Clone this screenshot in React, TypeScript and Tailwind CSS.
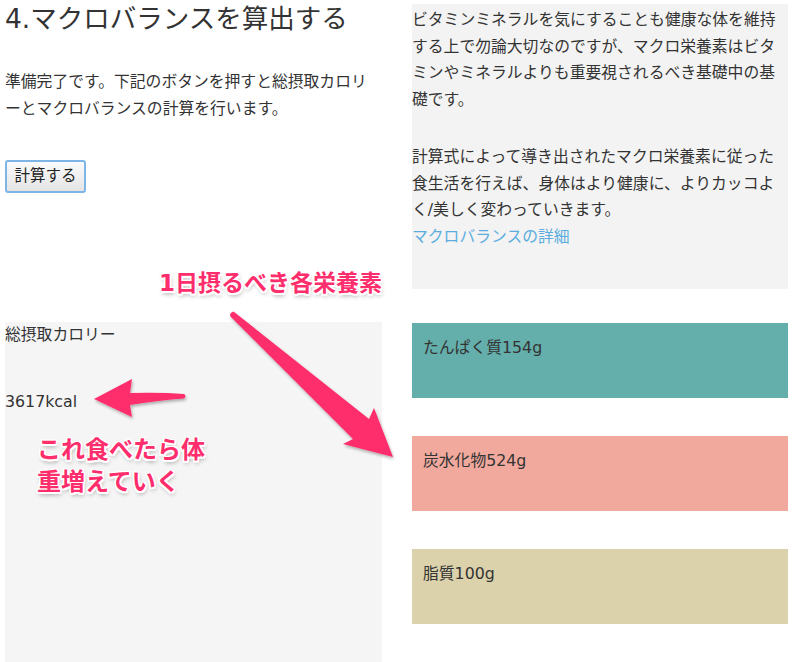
import React from "react";

const font = "font-['DejaVu_Sans','Noto_Sans_CJK_JP',sans-serif]";
const outline =
  "[text-shadow:1.5px_0_0_#fff,-1.5px_0_0_#fff,0_1.5px_0_#fff,0_-1.5px_0_#fff,1.5px_1.5px_0_#fff,-1.5px_-1.5px_0_#fff,1.5px_-1.5px_0_#fff,-1.5px_1.5px_0_#fff,1px_3px_4px_rgba(0,0,0,0.35)]";

export default function App() {
  return (
    <div className={`relative w-[800px] h-[662px] overflow-hidden bg-white text-[#333] ${font}`}>
      <div className="grid grid-cols-[377px_376px] gap-x-[30px] pl-[5px]">
        {/* Row 1 left */}
        <div>
          <h1 className="text-[26.5px] leading-[38px] font-normal text-[#333]">4.マクロバランスを算出する</h1>
          <p className="mt-[31px] text-[15.8px] leading-[26.5px]">
            準備完了です。下記のボタンを押すと総摂取カロリ
            <br />
            ーとマクロバランスの計算を行います。
          </p>
          <button className="mt-[38px] w-[81px] h-[33px] rounded-[3px] border-2 border-[#7db5e6] bg-gradient-to-b from-[#fbfbfb] to-[#e4e4e4] text-[15.5px] text-[#222] flex items-center justify-center">
            計算する
          </button>
        </div>
        {/* Row 1 right */}
        <div className="mt-[4px] h-[285px] bg-[#f3f3f3] pt-[3px] text-[15.8px] leading-[26.5px]">
          <p>
            ビタミンミネラルを気にすることも健康な体を維持
            <br />
            する上で勿論大切なのですが、マクロ栄養素はビタ
            <br />
            ミンやミネラルよりも重要視されるべき基礎中の基
            <br />
            礎です。
          </p>
          <p className="mt-[31px]">
            計算式によって導き出されたマクロ栄養素に従った
            <br />
            食生活を行えば、身体はより健康に、よりカッコよ
            <br />
            く/美しく変わっていきます。
          </p>
          <a className="text-[#5badde]">マクロバランスの詳細</a>
        </div>
        {/* Row 2 left */}
        <div className="mt-[33px] h-[360px] bg-[#f5f5f5] text-[15.8px] leading-[26px]">
          <p>総摂取カロリー</p>
          <p className="mt-[41px]">3617kcal</p>
        </div>
        {/* Row 2 right */}
        <div className="mt-[34px] flex flex-col gap-[38px] text-[15.8px] leading-[26px]">
          <div className="h-[75px] bg-[#64aeab] pl-[11px] pt-[12px]">たんぱく質154g</div>
          <div className="h-[75px] bg-[#f1a99d] pl-[11px] pt-[12px]">炭水化物524g</div>
          <div className="h-[75px] bg-[#dbd2ac] pl-[11px] pt-[12px]">脂質100g</div>
        </div>
      </div>

      {/* Annotations overlay */}
      <svg className="absolute left-0 top-0 pointer-events-none" width="800" height="662" viewBox="0 0 800 662">
        <defs>
          <filter id="sh" x="-20%" y="-20%" width="140%" height="140%">
            <feDropShadow dx="1" dy="2" stdDeviation="1.5" floodColor="#000" floodOpacity="0.3" />
          </filter>
        </defs>
        <g fill="#fe2d6c" filter="url(#sh)">
          <path d="M233.5 311.5 Q229 313 230.5 316.5 L353 439 L343 444 L393 457 L374 408 L369 419 Z" />
          <path d="M94 399 L132 379 L130 393 Q160 392 184 394 Q187 396 184 398.5 Q160 400 130 405 L132 417 Z" />
        </g>
      </svg>
      <div className={`absolute left-[159px] top-[268px] text-[23px] leading-[30px] font-bold text-[#fe2d6c] whitespace-nowrap ${outline}`}>
        1日摂るべき各栄養素
      </div>
      <div className={`absolute left-[37px] top-[434px] text-[24px] leading-[32px] font-bold text-[#fe2d6c] whitespace-nowrap ${outline}`}>
        これ食べたら体
        <br />
        重増えていく
      </div>
    </div>
  );
}
